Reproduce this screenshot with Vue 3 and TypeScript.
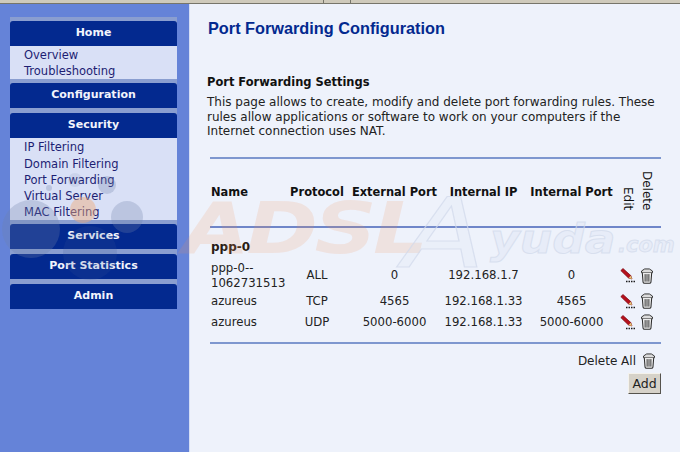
<script setup lang="ts">
interface Row { name: string; protocol: string; ext: string; ip: string; int: string }
const menu = [
  { title: 'Home', links: ['Overview', 'Troubleshooting'] },
  { title: 'Configuration', links: [] as string[] },
  { title: 'Security', links: ['IP Filtering', 'Domain Filtering', 'Port Forwarding', 'Virtual Server', 'MAC Filtering'] },
  { title: 'Services', links: [] as string[] },
  { title: 'Port Statistics', links: [] as string[] },
  { title: 'Admin', links: [] as string[] },
]
const rows: Row[] = [
  { name: 'ppp-0--\n1062731513', protocol: 'ALL', ext: '0', ip: '192.168.1.7', int: '0' },
  { name: 'azureus', protocol: 'TCP', ext: '4565', ip: '192.168.1.33', int: '4565' },
  { name: 'azureus', protocol: 'UDP', ext: '5000-6000', ip: '192.168.1.33', int: '5000-6000' },
]
</script>

<template>
  <div class="page">
    <div class="topbar"><span class="tab-a"></span><span class="tab-b"></span><span class="tab-c"></span></div>
    <div class="body">
      <aside class="side">
        <nav class="nav">
          <section v-for="m in menu" :key="m.title" class="group" :class="{ solo: !m.links.length }">
            <h3 class="head">{{ m.title }}</h3>
            <ul v-if="m.links.length" class="links">
              <li v-for="l in m.links" :key="l">{{ l }}</li>
            </ul>
          </section>
        </nav>
      </aside>
      <main class="main">
        <h1 class="title">Port Forwarding Configuration</h1>
        <h2 class="sub">Port Forwarding Settings</h2>
        <p class="desc">This page allows to create, modify and delete port forwarding rules. These<br>rules allow applications or software to work on your computers if the<br>Internet connection uses NAT.</p>
        <div class="wrap">
          <div class="grid ghead">
            <span class="c-name">Name</span>
            <span>Protocol</span>
            <span>External Port</span>
            <span>Internal IP</span>
            <span>Internal Port</span>
            <span class="vert">Edit</span>
            <span class="vert">Delete</span>
          </div>
          <div class="group-name">ppp-0</div>
          <div class="rows">
            <div v-for="(r, i) in rows" :key="i" class="grid row">
              <span class="c-name">{{ r.name }}</span>
              <span>{{ r.protocol }}</span>
              <span>{{ r.ext }}</span>
              <span>{{ r.ip }}</span>
              <span>{{ r.int }}</span>
              <svg class="pencil" width="16" height="15" viewBox="0 0 16 15">
                <path d="M0.8 2.6 L3 0.5 L10.8 7.6 L12 11 L8.4 9.9 Z" fill="#b5101c" stroke="#7a0c14" stroke-width="0.7"/>
                <path d="M8.6 9.9 L10.8 7.8 L12 11 Z" fill="#e9d27a"/>
                <path d="M6 13.5 H16" stroke="#1c1c1c" stroke-width="1.5" stroke-dasharray="1.5 1"/>
              </svg>
              <svg class="trash" width="14" height="16" viewBox="0 0 14 17">
                <use href="#trash-can"/>
              </svg>
            </div>
          </div>
          <div class="foot">
            <span>Delete All</span>
            <svg class="trash" width="14" height="16" viewBox="0 0 14 17">
              <defs>
                <g id="trash-can" fill="none" stroke="#2c2c2c">
                  <path d="M4.5 1 H9.5 L12.8 3.2 V5 H1.2 V3.2 Z" fill="#dcdcdc" stroke-width="1"/>
                  <path d="M2 5 L2.8 15 Q3 16.2 4.4 16.2 H9.6 Q11 16.2 11.2 15 L12 5" fill="#ececec" stroke-width="1.1"/>
                  <path d="M5 6.5 V14.5 M7 6.5 V14.5 M9 6.5 V14.5" stroke-width="1"/>
                </g>
              </defs>
              <use href="#trash-can"/>
            </svg>
          </div>
          <div class="actions"><button class="add" type="button">Add</button></div>
        </div>
      </main>
    </div>
    <div class="mark" aria-hidden="true">
      <i class="dot d1"></i><i class="dot d2"></i><i class="dot d3"></i><i class="dot d4"></i><i class="dot d5"></i><i class="dot d6"></i><i class="dot d7"></i>
      <span class="m-adsl">ADSL</span><span class="m-a">A</span><span class="m-ayuda">yuda</span><span class="m-com">.com</span>
    </div>
  </div>
</template>

<style>
html, body { margin: 0; background: #eef2fb; }
</style>

<style scoped>
.page { position: relative; width: 680px; height: 452px; overflow: hidden; font-family: "DejaVu Sans", Verdana, sans-serif; font-size: 11px; color: #222; background: #eef2fb; }
.topbar { display: flex; height: 4px; background: #cfcabb; box-sizing: border-box; border-bottom: 1px solid #77756a; }
.tab-a { width: 323px; border-right: 1px solid #77756a; }
.tab-b { width: 26px; border-right: 1px solid #77756a; }
.tab-c { flex: 1; }
.body { display: flex; height: 448px; }
.side { width: 189px; flex: none; background: #6583d8; padding: 13px 12px 0 10px; box-sizing: border-box; }
.nav { width: 167px; display: flex; flex-direction: column; gap: 4px; background: #8a9ed0; padding-top: 4px; }
.group { display: flex; flex-direction: column; }
.group.solo { margin-bottom: 1px; }
.group.solo:last-child { margin-bottom: 0; }
.head { margin: 0; height: 25px; line-height: 24px; text-align: center; background: #03298f; color: #f2f4fc; font-size: 11px; font-weight: 700; border-radius: 3px 3px 0 0; }
.links { list-style: none; margin: 0; padding: 1px 0 0 14px; background: #d9e0f6; color: #1d1e73; font-size: 11.5px; }
.links li { height: 16.2px; line-height: 16.2px; }
.main { flex: 1; border-left: 1px solid #d5def5; padding: 0 0 0 17px; min-width: 0; }
.title { margin: 14px 0 0 1px; font: 700 16.3px/20px "Liberation Sans", Arial, sans-serif; color: #03298f; }
.sub { margin: 37px 0 0 0; font-size: 11.45px; line-height: 14px; font-weight: 700; color: #111; }
.desc { margin: 6px 0 0 0; font-size: 12px; line-height: 14.5px; color: #222; }
.wrap { width: 451px; margin: 18px 0 0 3px; }
.grid { display: grid; grid-template-columns: 78px 58px 97px 81px 95px 18px 20px 4px; align-items: center; text-align: center; }
.c-name { text-align: left; padding-left: 1px; white-space: pre-line; }
.ghead { height: 71px; box-sizing: border-box; border-top: 2px solid #7e97cf; border-bottom: 2px solid #6f86c9; font-weight: 700; color: #111; font-size: 11.45px; }
.vert { writing-mode: vertical-rl; font-weight: 400; font-size: 12px; justify-self: center; align-self: end; margin-bottom: 15px; }
.group-name { font-weight: 700; font-size: 12px; height: 17px; line-height: 17px; margin-top: 11px; padding-left: 1px; color: #2a1c14; }
.rows { margin-top: 5px; }
.row { min-height: 21px; color: #222; font-size: 11.7px; line-height: 15px; }
.pencil { justify-self: center; }
.trash { justify-self: center; }
.foot { margin-top: 9px; border-top: 2px solid #7e97cf; padding: 9px 5px 0 0; display: flex; justify-content: flex-end; align-items: center; gap: 6px; font-size: 12px; }
.actions { display: flex; justify-content: flex-end; margin-top: 4px; }
.add { width: 33px; height: 21px; padding: 0; font: 400 12.5px "DejaVu Sans", sans-serif; color: #222; background: #d6d2c9; border: 1px solid; border-color: #f4f2ec #55534d #55534d #f4f2ec; }
.mark { position: absolute; inset: 0; pointer-events: none; }
.dot { position: absolute; border-radius: 50%; background: rgba(110,130,170,0.28); }
.d1 { left: 2px; top: 200px; width: 58px; height: 58px; }
.d2 { left: 111px; top: 201px; width: 32px; height: 32px; }
.d3 { left: 98px; top: 176px; width: 18px; height: 18px; }
.d4 { left: 63px; top: 226px; width: 54px; height: 54px; background: rgba(60,90,150,0.16); }
.d5 { left: 70px; top: 197px; width: 26px; height: 26px; background: rgba(240,170,120,0.45); }
.d6 { left: 46px; top: 185px; width: 6px; height: 6px; }
.d7 { left: 68px; top: 173px; width: 14px; height: 14px; background: rgba(110,130,170,0.14); }
.m-adsl, .m-a, .m-ayuda, .m-com { position: absolute; font-family: "DejaVu Sans", sans-serif; font-style: italic; transform-origin: left top; }
.m-adsl { left: 183px; top: 184px; font-weight: 700; font-size: 72px; line-height: 88px; letter-spacing: -3px; color: rgba(240,140,90,0.16); transform: scaleX(1.2); }
.m-a { left: 403px; top: 178px; font-weight: 400; font-size: 96px; line-height: 112px; color: rgba(205,215,235,0.1); -webkit-text-stroke: 1px rgba(210,218,235,0.75); transform: scaleX(1.25); }
.m-ayuda { left: 490px; top: 214px; font-weight: 700; font-size: 40px; line-height: 50px; color: rgba(205,215,235,0.2); -webkit-text-stroke: 1px rgba(210,218,235,0.75); transform: scaleX(1.14); }
.m-com { left: 618px; top: 232px; font-weight: 700; font-size: 21px; line-height: 27px; color: rgba(205,215,235,0.2); -webkit-text-stroke: 1px rgba(210,218,235,0.75); }
</style>
